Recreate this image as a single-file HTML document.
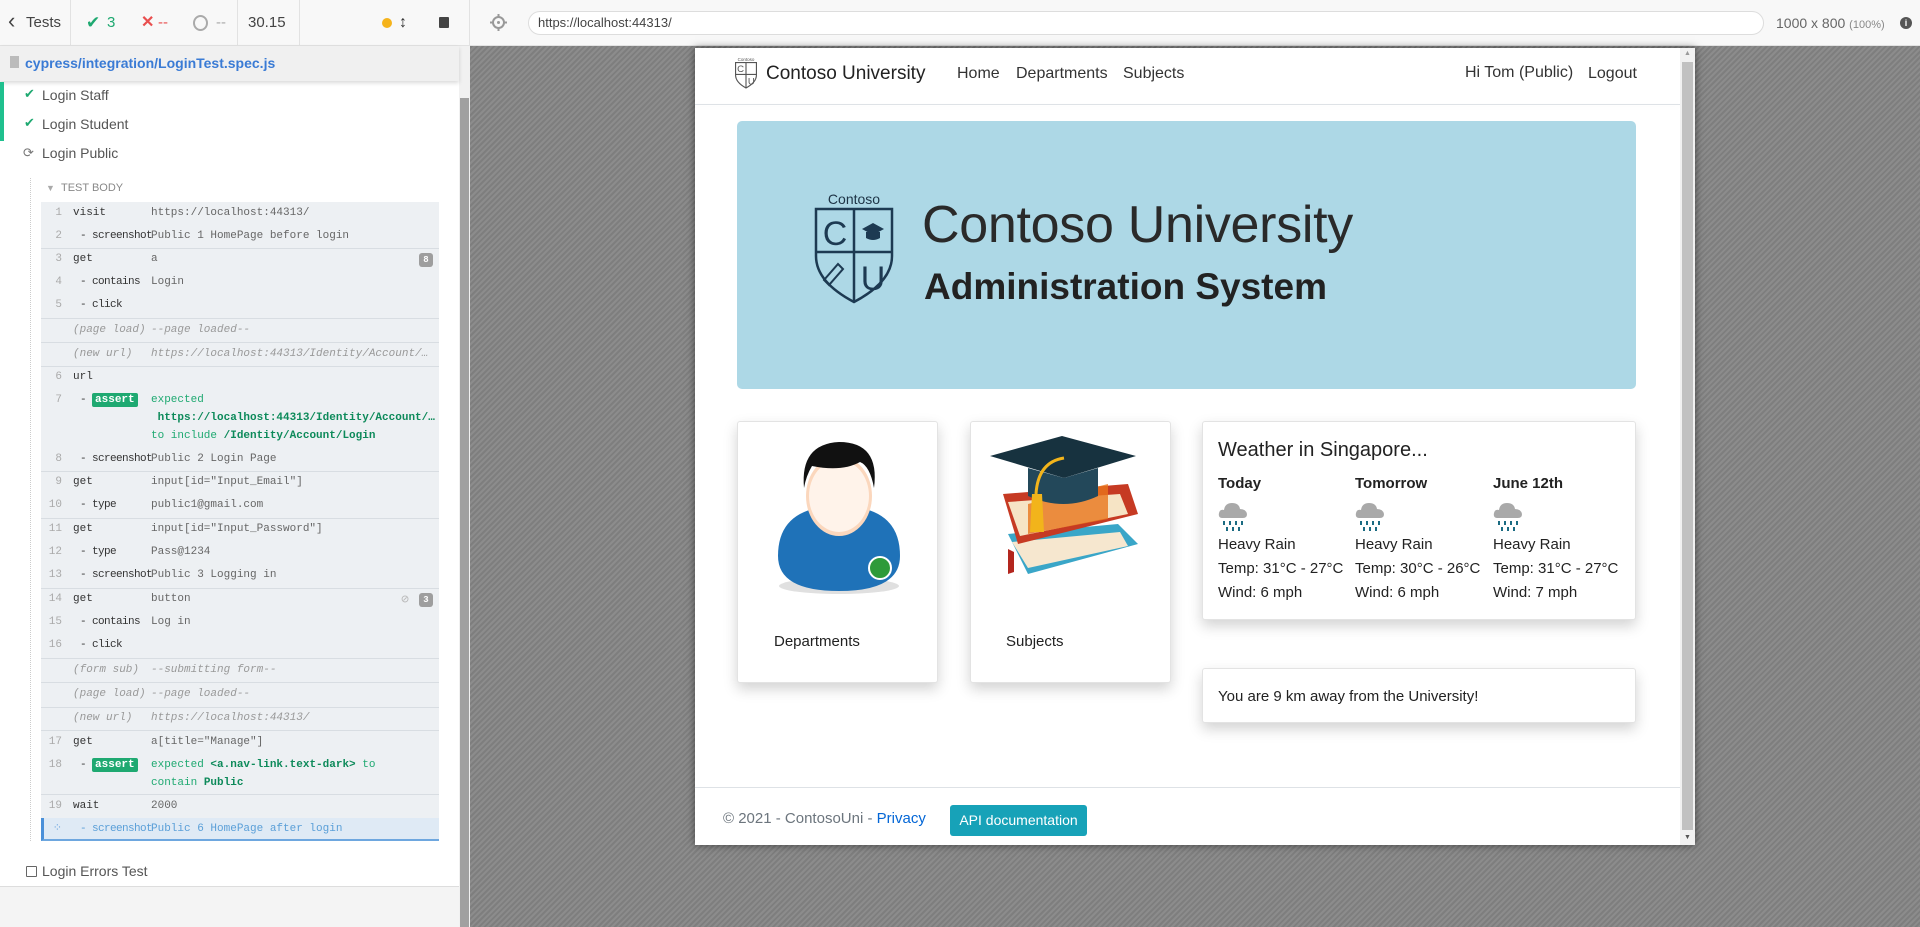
<!DOCTYPE html>
<html><head><meta charset="utf-8">
<style>
*{box-sizing:border-box;margin:0;padding:0}
body{width:1920px;height:927px;overflow:hidden;font-family:"Liberation Sans",sans-serif;background:#f4f4f4;position:relative}
.a{position:absolute}
.top{left:0;top:0;width:1920px;height:46px;background:#f8f8f8;border-bottom:1px solid #e2e2e2}
.tb{font-size:15px;color:#444;line-height:46px;white-space:nowrap}
.sep{top:0;width:1px;height:46px;background:#e2e2e2}
.left{left:0;top:46px;width:459px;height:841px;background:#fff;border-bottom:1px solid #ddd}
.mono{font-family:"Liberation Mono",monospace;font-size:11px}
.row{left:41px;width:398px;height:23px;line-height:23px;white-space:nowrap}
.num{position:absolute;left:0;width:21px;text-align:right;color:#aaa}
.cmd{position:absolute;left:32px;color:#333}
.sub{position:absolute;left:39px;color:#333;letter-spacing:-.6px}
.msg{position:absolute;left:110px;color:#666}
.it{font-style:italic;color:#999}
.ln{left:41px;width:398px;height:1px;background:#d8dde2}
.badge{background:#1fa971;color:#fff;font-weight:bold;padding:1px 3px;border-radius:2px;letter-spacing:0}
.g{color:#1fa971}.gb{color:#0d8a5a;font-weight:bold}
.cnt{right:6px;top:5px;width:14px;height:14px;background:#9e9e9e;border-radius:3px;color:#fff;font-size:9px;line-height:14px;text-align:center;font-weight:bold}
.frame{left:695px;top:48px;width:1000px;height:797px;background:#fff;box-shadow:0 0 8px rgba(0,0,0,.5)}
.card{background:#fff;border:1px solid #e3e3e3;border-radius:3px;box-shadow:0 6px 14px rgba(0,0,0,.18)}
.wt{font-size:15px;color:#222;line-height:24px}
</style></head><body>
<div class="a" style="left:470px;top:46px;width:1450px;height:881px;background:repeating-linear-gradient(-45deg,#8c8c8c 0 2px,#7e7e7e 2px 4px)"></div>

<div class="a top"></div>
<div class="a tb" style="left:8px;top:0;font-size:22px;line-height:42px;color:#444">‹</div>
<div class="a tb" style="left:26px">Tests</div>
<div class="a sep" style="left:70px"></div>
<div class="a tb" style="left:86px;color:#1fa971;font-size:17px">✔</div>
<div class="a tb" style="left:107px;color:#1fa971">3</div>
<div class="a tb" style="left:141px;color:#e94f4f;font-weight:bold;font-size:16px">✕</div>
<div class="a tb" style="left:158px;color:#e94f4f">--</div>
<div class="a" style="left:193px;top:15px;width:15px;height:16px;border:2px solid #aaa;border-radius:50%"></div>
<div class="a tb" style="left:216px;color:#aaa">--</div>
<div class="a sep" style="left:237px"></div>
<div class="a tb" style="left:248px">30.15</div>
<div class="a sep" style="left:299px"></div>
<div class="a" style="left:382px;top:18px;width:10px;height:10px;border-radius:50%;background:#f5b31b"></div>
<div class="a tb" style="left:399px;font-size:16px;color:#333">↕</div>
<div class="a" style="left:439px;top:17px;width:10px;height:11px;background:#444;border-radius:1px"></div>
<div class="a sep" style="left:469px"></div>
<svg class="a" style="left:490px;top:14px" width="17" height="17" viewBox="0 0 17 17"><circle cx="8.5" cy="8.5" r="5.5" fill="none" stroke="#999" stroke-width="2"/><circle cx="8.5" cy="8.5" r="1.5" fill="#999"/><path d="M8.5 0v4M8.5 13v4M0 8.5h4M13 8.5h4" stroke="#999" stroke-width="2"/></svg>
<div class="a" style="left:528px;top:11px;width:1236px;height:24px;border:1px solid #ddd;border-radius:12px;background:#fff;font-size:13px;color:#444;line-height:22px;padding-left:9px">https://localhost:44313/</div>
<div class="a tb" style="left:1776px;font-size:14px;color:#666">1000 x 800 <span style="font-size:11px;color:#888">(100%)</span></div>
<div class="a" style="left:1900px;top:17px;width:12px;height:12px;border-radius:50%;background:#555;color:#fff;font-size:9px;line-height:12px;text-align:center;font-weight:bold">i</div>

<div class="a left"></div>
<div class="a" style="left:459px;top:46px;width:11px;height:881px;background:#f1f1f1"></div>
<div class="a" style="left:460px;top:98px;width:9px;height:829px;background:#a0a0a0"></div>
<div class="a" style="left:0;top:46px;width:459px;height:35px;background:#f0f0f0;box-shadow:0 2px 4px rgba(0,0,0,.15)"></div>
<div class="a" style="left:10px;top:56px;width:9px;height:12px;background:#bbb"></div>
<div class="a" style="left:25px;top:46px;line-height:35px;font-size:14px;color:#3a7bd5;font-weight:bold">cypress/integration/LoginTest.spec.js</div>
<div class="a" style="left:0;top:82px;width:4px;height:59px;background:#1fc08e"></div>
<div class="a" style="left:24px;top:86px;font-size:13px;color:#1fa971">✔</div>
<div class="a" style="left:42px;top:87px;font-size:14px;color:#555">Login Staff</div>
<div class="a" style="left:24px;top:115px;font-size:13px;color:#1fa971">✔</div>
<div class="a" style="left:42px;top:116px;font-size:14px;color:#555">Login Student</div>
<div class="a" style="left:23px;top:145px;font-size:13px;color:#777">⟳</div>
<div class="a" style="left:42px;top:145px;font-size:14px;color:#555">Login Public</div>
<div class="a" style="left:30px;top:178px;width:0;height:663px;border-left:1px dotted #ccc"></div>
<div class="a" style="left:46px;top:183px;font-size:9px;color:#aaa">▼</div>
<div class="a" style="left:61px;top:182px;font-size:11px;color:#888">TEST BODY</div>
<div class="a" style="left:41px;top:202px;width:398px;height:638px;background:#edf0f3"></div>
<div class="a ln" style="top:248px"></div><div class="a ln" style="top:318px"></div><div class="a ln" style="top:342px"></div><div class="a ln" style="top:366px"></div><div class="a ln" style="top:471px"></div><div class="a ln" style="top:518px"></div><div class="a ln" style="top:588px"></div><div class="a ln" style="top:658px"></div><div class="a ln" style="top:682px"></div><div class="a ln" style="top:707px"></div><div class="a ln" style="top:730px"></div><div class="a ln" style="top:794px"></div><div class="a ln" style="top:818px"></div>

<div class="mono">
<div class="a row" style="top:202px"><span class="num">1</span><span class="cmd">visit</span><span class="msg">https://localhost:44313/</span></div>
<div class="a row" style="top:225px"><span class="num">2</span><span class="sub">- screenshot</span><span class="msg">Public 1 HomePage before login</span></div>
<div class="a row" style="top:248px"><span class="num">3</span><span class="cmd">get</span><span class="msg">a</span><span class="a cnt">8</span></div>
<div class="a row" style="top:271px"><span class="num">4</span><span class="sub">- contains</span><span class="msg">Login</span></div>
<div class="a row" style="top:294px"><span class="num">5</span><span class="sub">- click</span></div>
<div class="a row" style="top:319px"><span class="cmd it">(page load)</span><span class="msg it">--page loaded--</span></div>
<div class="a row" style="top:343px"><span class="cmd it">(new url)</span><span class="msg it">https://localhost:44313/Identity/Account/…</span></div>
<div class="a row" style="top:366px"><span class="num">6</span><span class="cmd">url</span></div>
<div class="a row" style="top:389px"><span class="num">7</span><span class="sub">- <span class="badge">assert</span></span><span class="msg g">expected</span></div>
<div class="a row" style="top:407px"><span class="msg gb">&nbsp;https://localhost:44313/Identity/Account/…</span></div>
<div class="a row" style="top:425px"><span class="msg g">to include <b class="gb">/Identity/Account/Login</b></span></div>
<div class="a row" style="top:448px"><span class="num">8</span><span class="sub">- screenshot</span><span class="msg">Public 2 Login Page</span></div>
<div class="a row" style="top:471px"><span class="num">9</span><span class="cmd">get</span><span class="msg">input[id="Input_Email"]</span></div>
<div class="a row" style="top:494px"><span class="num">10</span><span class="sub">- type</span><span class="msg">public1@gmail.com</span></div>
<div class="a row" style="top:518px"><span class="num">11</span><span class="cmd">get</span><span class="msg">input[id="Input_Password"]</span></div>
<div class="a row" style="top:541px"><span class="num">12</span><span class="sub">- type</span><span class="msg">Pass@1234</span></div>
<div class="a row" style="top:564px"><span class="num">13</span><span class="sub">- screenshot</span><span class="msg">Public 3 Logging in</span></div>
<div class="a row" style="top:588px"><span class="num">14</span><span class="cmd">get</span><span class="msg">button</span><span class="a" style="right:30px;top:0;color:#bbb;font-size:13px">⊘</span><span class="a cnt">3</span></div>
<div class="a row" style="top:611px"><span class="num">15</span><span class="sub">- contains</span><span class="msg">Log in</span></div>
<div class="a row" style="top:634px"><span class="num">16</span><span class="sub">- click</span></div>
<div class="a row" style="top:659px"><span class="cmd it">(form sub)</span><span class="msg it">--submitting form--</span></div>
<div class="a row" style="top:683px"><span class="cmd it">(page load)</span><span class="msg it">--page loaded--</span></div>
<div class="a row" style="top:707px"><span class="cmd it">(new url)</span><span class="msg it">https://localhost:44313/</span></div>
<div class="a row" style="top:731px"><span class="num">17</span><span class="cmd">get</span><span class="msg">a[title="Manage"]</span></div>
<div class="a row" style="top:754px"><span class="num">18</span><span class="sub">- <span class="badge">assert</span></span><span class="msg g">expected <b class="gb">&lt;a.nav-link.text-dark&gt;</b> to</span></div>
<div class="a row" style="top:772px"><span class="msg g">contain <b class="gb">Public</b></span></div>
<div class="a row" style="top:795px"><span class="num">19</span><span class="cmd">wait</span><span class="msg">2000</span></div>
<div class="a" style="left:41px;top:818px;width:398px;height:23px;background:#dfeaf5;border-left:3px solid #4a90d9;border-bottom:2px solid #6ea7df"></div>
<div class="a row" style="top:818px"><span class="num" style="color:#6ea7df">⁘</span><span class="sub" style="color:#5a9fd8">- screenshot</span><span class="msg" style="color:#5a9fd8">Public 6 HomePage after login</span></div>
</div>
<div class="a" style="left:26px;top:866px;width:11px;height:11px;border:1px solid #666;border-radius:1px"></div>
<div class="a" style="left:42px;top:863px;font-size:14px;color:#555">Login Errors Test</div>

<div class="a frame"></div>
<div class="a" style="left:1680px;top:48px;width:15px;height:797px;background:#f1f1f1"></div>
<div class="a" style="left:1682px;top:62px;width:11px;height:768px;background:#c1c1c1"></div>
<div class="a" style="left:1684px;top:50px;font-size:7px;color:#999">▲</div>
<div class="a" style="left:1684px;top:834px;font-size:7px;color:#555">▼</div>
<div class="a" style="left:695px;top:104px;width:985px;height:1px;background:#dee2e6;box-shadow:0 2px 6px rgba(0,0,0,.06)"></div>
<svg class="a" style="left:735px;top:57px" width="22" height="32" viewBox="0 0 78 110"><text x="39" y="12" font-size="16" text-anchor="middle" fill="#555" font-family="Liberation Sans">Contoso</text><path d="M2 18H76V62Q76 88 39 108Q2 88 2 62Z" fill="none" stroke="#555" stroke-width="4"/><path d="M39 18V108M2 60H76" stroke="#555" stroke-width="4"/><text x="20" y="52" font-size="34" text-anchor="middle" fill="#555" font-family="Liberation Sans">C</text><text x="58" y="95" font-size="34" text-anchor="middle" fill="#555" font-family="Liberation Sans">U</text></svg>
<div class="a" style="left:766px;top:63px;font-size:19px;color:#222">Contoso University</div>
<div class="a" style="left:957px;top:65px;font-size:16px;color:#333">Home</div>
<div class="a" style="left:1016px;top:65px;font-size:16px;color:#333">Departments</div>
<div class="a" style="left:1123px;top:65px;font-size:16px;color:#333">Subjects</div>
<div class="a" style="left:1465px;top:64px;font-size:16px;color:#333">Hi Tom (Public)</div>
<div class="a" style="left:1588px;top:65px;font-size:16px;color:#333">Logout</div>
<div class="a" style="left:737px;top:121px;width:899px;height:268px;background:#add8e6;border-radius:5px"></div>
<svg class="a" style="left:812px;top:192px" width="84" height="112" viewBox="0 0 84 112"><text x="42" y="12" font-size="14" text-anchor="middle" fill="#1d3345" font-family="Liberation Sans">Contoso</text><path d="M4 17H80V64Q80 90 42 110Q4 90 4 64Z" fill="none" stroke="#1d3a52" stroke-width="2.5"/><path d="M42 17V110M4 60H80" stroke="#1d3a52" stroke-width="2.5"/><text x="23" y="53" font-size="34" text-anchor="middle" fill="#1d3a52" font-family="Liberation Sans">C</text><text x="61" y="98" font-size="34" text-anchor="middle" fill="#1d3a52" font-family="Liberation Sans">U</text><path d="M50 37L61 31L72 37L61 43Z" fill="#1d3a52"/><path d="M54 40V46Q61 50 68 46V40" fill="#1d3a52"/><path d="M12 88L26 72L31 77L17 93Z" fill="none" stroke="#1d3a52" stroke-width="2"/></svg>
<div class="a" style="left:922px;top:195px;font-size:52px;color:#2a2a2a;letter-spacing:-.3px">Contoso University</div>
<div class="a" style="left:924px;top:266px;font-size:37px;font-weight:bold;color:#222">Administration System</div>
<div class="a card" style="left:737px;top:421px;width:201px;height:262px"></div>
<div class="a card" style="left:970px;top:421px;width:201px;height:262px"></div>
<svg class="a" style="left:772px;top:436px" width="134" height="164" viewBox="0 0 134 164"><ellipse cx="67" cy="150" rx="60" ry="8" fill="#ccc" opacity=".6"/><path d="M6 120Q6 70 67 70Q128 70 128 120Q128 155 67 155Q6 155 6 120Z" fill="#1f72b8"/><path d="M45 72L67 98L89 72Z" fill="#fff"/><ellipse cx="67" cy="60" rx="33" ry="40" fill="#fbd7bd"/><ellipse cx="67" cy="60" rx="30" ry="36" fill="#fff3ea"/><path d="M32 52Q28 8 67 6Q108 6 102 52Q98 30 88 26Q70 36 40 30Q34 40 32 52Z" fill="#111"/><circle cx="108" cy="132" r="11" fill="#2e9a3a" stroke="#fff" stroke-width="2"/></svg>
<svg class="a" style="left:988px;top:434px" width="164" height="158" viewBox="0 0 164 158"><path d="M20 100L130 90L150 110L40 140Z" fill="#3aa6c8"/><path d="M24 108L132 98L140 112L40 134Z" fill="#f6e7cf"/><path d="M15 60L140 50L150 80L30 110Z" fill="#c63a23"/><path d="M20 68L132 60L140 80L32 102Z" fill="#f6e4c5"/><path d="M40 70L120 50L120 85L40 100Z" fill="#e8751c" opacity=".8"/><path d="M20 115V140L26 138V118Z" fill="#b3261e"/><path d="M2 22L74 2L148 22L76 44Z" fill="#17323f"/><path d="M40 34V62Q76 78 110 62V34L76 44Z" fill="#23485a"/><path d="M76 24Q50 28 48 60" stroke="#f2b41b" stroke-width="3" fill="none"/><path d="M44 60H54L56 98H42Z" fill="#f2b41b"/></svg>
<div class="a" style="left:774px;top:633px;font-size:15px;color:#222">Departments</div>
<div class="a" style="left:1006px;top:633px;font-size:15px;color:#222">Subjects</div>
<div class="a card" style="left:1202px;top:421px;width:434px;height:199px"></div>
<div class="a" style="left:1218px;top:439px;font-size:20px;color:#222">Weather in Singapore...</div>
<div class="a wt" style="left:1218px;top:472px;font-weight:bold">Today</div>
<div class="a wt" style="left:1355px;top:472px;font-weight:bold">Tomorrow</div>
<div class="a wt" style="left:1493px;top:472px;font-weight:bold">June 12th</div>
<svg class="a" style="left:1218px;top:500px" width="34" height="34" viewBox="0 0 34 34"><path d="M4 18Q0 18 1 13Q2 9 6 10Q7 3 14 3Q21 3 22 9Q28 9 29 14Q29 18 25 18Z" fill="#a9a9a9"/><path d="M6 21v4M12 21v4M18 21v4M24 21v4M9 27v4M15 27v4M21 27v4" stroke="#1b6b82" stroke-width="2"/></svg>
<svg class="a" style="left:1355px;top:500px" width="34" height="34" viewBox="0 0 34 34"><path d="M4 18Q0 18 1 13Q2 9 6 10Q7 3 14 3Q21 3 22 9Q28 9 29 14Q29 18 25 18Z" fill="#a9a9a9"/><path d="M6 21v4M12 21v4M18 21v4M24 21v4M9 27v4M15 27v4M21 27v4" stroke="#1b6b82" stroke-width="2"/></svg>
<svg class="a" style="left:1493px;top:500px" width="34" height="34" viewBox="0 0 34 34"><path d="M4 18Q0 18 1 13Q2 9 6 10Q7 3 14 3Q21 3 22 9Q28 9 29 14Q29 18 25 18Z" fill="#a9a9a9"/><path d="M6 21v4M12 21v4M18 21v4M24 21v4M9 27v4M15 27v4M21 27v4" stroke="#1b6b82" stroke-width="2"/></svg>
<div class="a wt" style="left:1218px;top:533px">Heavy Rain<br>Temp: 31°C - 27°C<br>Wind: 6 mph</div>
<div class="a wt" style="left:1355px;top:533px">Heavy Rain<br>Temp: 30°C - 26°C<br>Wind: 6 mph</div>
<div class="a wt" style="left:1493px;top:533px">Heavy Rain<br>Temp: 31°C - 27°C<br>Wind: 7 mph</div>
<div class="a card" style="left:1202px;top:668px;width:434px;height:55px"></div>
<div class="a" style="left:1218px;top:688px;font-size:15px;color:#222">You are 9 km away from the University!</div>
<div class="a" style="left:695px;top:787px;width:985px;height:1px;background:#dee2e6"></div>
<div class="a" style="left:723px;top:810px;font-size:15px;color:#6c757d">© 2021 - ContosoUni - <span style="color:#0366d6">Privacy</span></div>
<div class="a" style="left:950px;top:805px;width:137px;height:31px;background:#17a2b8;border-radius:3px;color:#fff;font-size:14px;line-height:31px;text-align:center">API documentation</div>
</body></html>
